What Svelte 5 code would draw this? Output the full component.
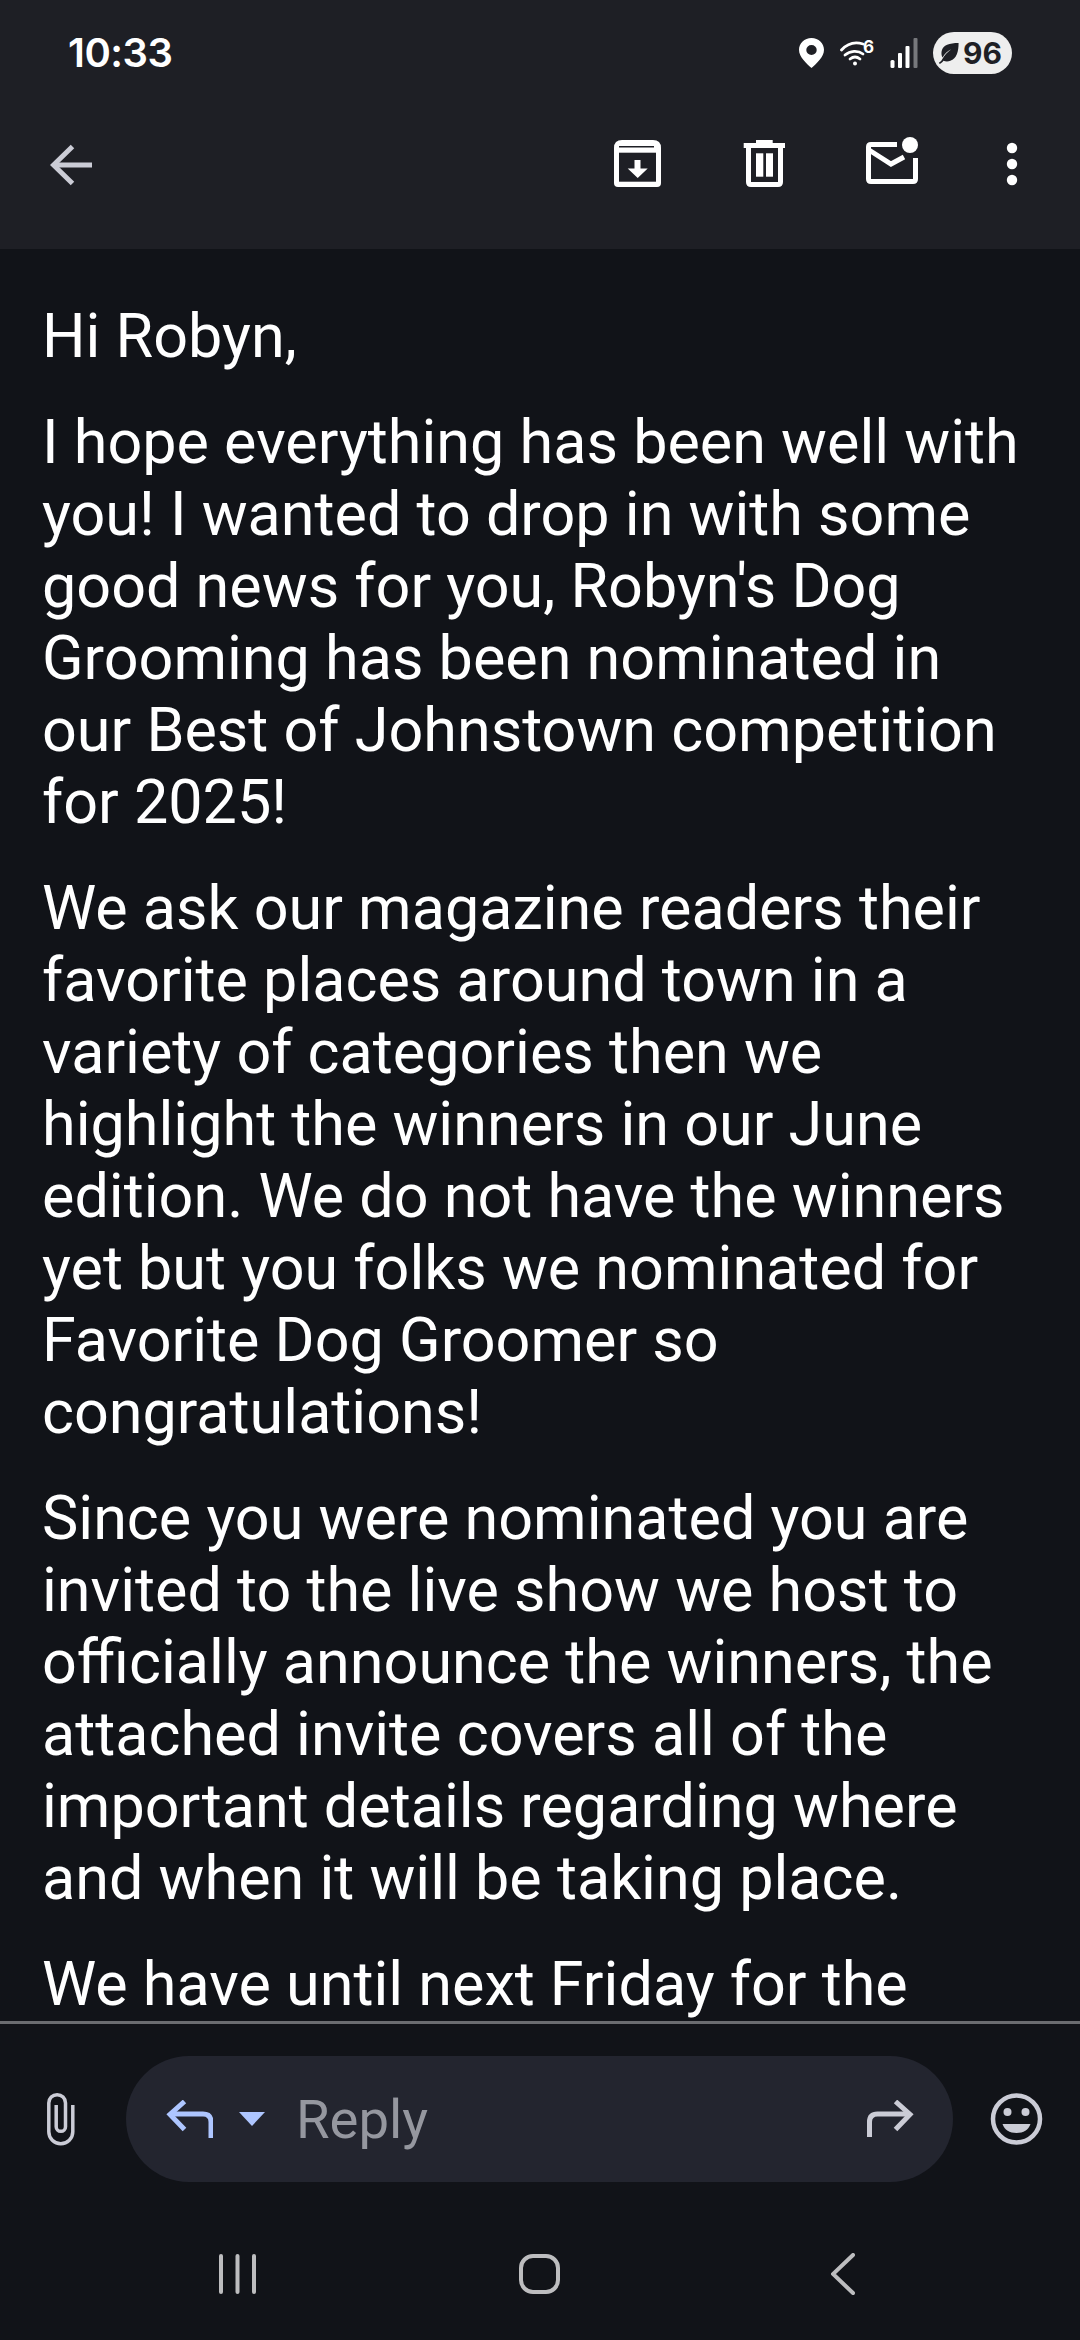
<script>
  const paragraphs = [
    ['Hi Robyn,'],
    [
      'I hope everything has been well with',
      "you! I wanted to drop in with some",
      "good news for you, Robyn's Dog",
      'Grooming has been nominated in',
      'our Best of Johnstown competition',
      'for 2025!'
    ],
    [
      'We ask our magazine readers their',
      'favorite places around town in a',
      'variety of categories then we',
      'highlight the winners in our June',
      'edition. We do not have the winners',
      'yet but you folks we nominated for',
      'Favorite Dog Groomer so',
      'congratulations!'
    ],
    [
      'Since you were nominated you are',
      'invited to the live show we host to',
      'officially announce the winners, the',
      'attached invite covers all of the',
      'important details regarding where',
      'and when it will be taking place.'
    ],
    ['We have until next Friday for the']
  ];
</script>

<div class="screen">
  <header class="top">
    <div class="status">
      <span class="time">10:33</span>
      <div class="status-icons">
        <svg class="pin" width="25" height="30" viewBox="0 0 24 30" preserveAspectRatio="none">
          <path fill-rule="evenodd" fill="#fff" d="M12 0C5.2 0 0 5.2 0 11.8 0 19 7 25.5 12 30c5-4.5 12-11 12-18.200C24 5.200 18.800 0 12 0zm0 7a5 5 0 1 1 0 10 5 5 0 0 1 0-10z" />
        </svg>
        <div class="wifi">
          <svg width="34" height="26" viewBox="0 0 34 26" fill="none" stroke="#fff" stroke-width="2.800" stroke-linecap="round">
            <path d="M1.500 10C7 4 15 1.500 23 4" />
            <path d="M5 15c5-4.500 13-5 18-1" />
            <path d="M10 19c3-2.400 7-2.400 10 0" />
            <circle cx="15" cy="23.500" r="2" fill="#fff" stroke="none" />
          </svg>
          <span class="wifi-six">6</span>
        </div>
        <svg class="signal" width="28" height="30" viewBox="0 0 27 30">
          <rect x="0" y="22" width="4" height="8" rx="1.500" fill="#fff" />
          <rect x="7.500" y="15" width="4" height="15" rx="1" fill="#fff" />
          <rect x="15" y="8" width="4" height="22" rx="1" fill="#fff" />
          <rect x="23" y="0" width="4" height="30" rx="1" fill="#77787c" />
        </svg>
        <div class="battery">
          <svg width="23" height="22" viewBox="0 0 24 24">
            <path fill="#1e1f25" d="M23 1C13 1 6 3 4.500 10c-.5 2.500 0 5 1 7C8 12.500 11 10 15 8c-4 3-7.500 6.500-10 11-.8 1.300-1.800 2.700-3.500 3.500l1 1.500c1.800-.8 3-2 4-3.500 2 .8 5 1 7.500 0C21 18 23 10 23 1z" />
          </svg>
          <span>96</span>
        </div>
      </div>
    </div>

    <div class="toolbar">
      <svg class="back" width="42" height="42" viewBox="0 0 42 42" fill="none" stroke="#cbccd6" stroke-width="5">
        <path d="M42 21H4" />
        <path d="M22.500 2.500 3.500 21l19 18.500" />
      </svg>
      <div class="actions">
        <svg width="60" height="60" viewBox="0 0 60 60">
          <path fill="#fff" d="M7 13v35q0 4 4 4h39q4 0 4-4V13q0-8-8-8H15q-8 0-8 8z" />
          <rect x="12" y="17.700" width="37" height="29" fill="#1e1f25" />
          <rect x="12" y="11" width="35" height="1.500" fill="#1e1f25" />
          <path fill="#fff" d="M27.500 25h6v8.500h7.200L30.700 43l-10-9.500h6.800z" />
        </svg>
        <svg width="60" height="60" viewBox="0 0 60 60">
          <path fill="#fff" d="M22 5h16.700v3H51v5H9.700V8H22z" />
          <path fill="none" stroke="#fff" stroke-width="5" d="M14.500 12v35q0 2.500 2.500 2.500h27q2.500 0 2.500-2.500V12" />
          <rect x="22" y="18.300" width="7.300" height="23.400" fill="#fff" />
          <rect x="32" y="18.300" width="7" height="23.400" fill="#fff" />
        </svg>
        <svg class="mail" width="60" height="60" viewBox="0 0 60 60" fill="none">
          <path stroke="#fff" stroke-width="5" d="M36 13.500H10q-2.500 0-2.500 2.500v32q0 2.500 2.500 2.500h42q2.500 0 2.500-2.500V27" />
          <path stroke="#fff" stroke-width="5" d="M8 19l22 14 13-7" />
          <circle cx="49" cy="14" r="8" fill="#fff" />
        </svg>
        <svg class="more" width="12" height="46" viewBox="0 0 12 46">
          <circle cx="6" cy="6" r="5.200" fill="#fff" />
          <circle cx="6" cy="22" r="5.200" fill="#fff" />
          <circle cx="6" cy="38" r="5.200" fill="#fff" />
        </svg>
      </div>
    </div>
  </header>

  <main class="content">
    {#each paragraphs as lines}
      <p>
        {#each lines as line}
          <span class="line">{line}</span>
        {/each}
      </p>
    {/each}
  </main>

  <footer class="bottom">
    <div class="reply-row">
      <svg class="clip" width="30" height="54" viewBox="0 0 30 54" fill="none" stroke="#cbccd6" stroke-width="3.500">
        <path d="M26.800 13v26.700a12 12 0 0 1-24 0V11a8.350 8.350 0 0 1 16.700 0v23.700a4.650 4.650 0 0 1-9.300 0V13" />
      </svg>
      <div class="reply-box">
        <svg class="reply-arrow" width="47" height="38" viewBox="0 0 47 38" fill="none" stroke="#aec6ff" stroke-width="5">
          <path d="M45 38V22q0-8-8-8H4" />
          <path d="M18.500 1.500 4 14.500l14.500 15" />
        </svg>
        <span class="caret"></span>
        <span class="reply-label">Reply</span>
        <svg class="forward" width="47" height="38" viewBox="0 0 47 38" fill="none" stroke="#cbccd6" stroke-width="5">
          <path d="M2.500 37V22q0-8 8-8H43" />
          <path d="M28.500 1.500 43 14.500l-14.500 15" />
        </svg>
      </div>
      <svg class="emoji" width="53" height="54" viewBox="0 0 52 54">
        <circle cx="26" cy="27" r="23.500" fill="none" stroke="#cbccd6" stroke-width="4.500" />
        <circle cx="17" cy="20" r="4" fill="#cbccd6" />
        <circle cx="35" cy="20" r="4" fill="#cbccd6" />
        <path fill="#cbccd6" d="M12 32h28c-2 6-7 9-14 9s-12-3-14-9z" />
      </svg>
    </div>

    <nav class="navbar">
      <svg width="37" height="40" viewBox="0 0 37 40" fill="#bdbdbf">
        <rect x="0" y="0" width="4" height="40" rx="2" />
        <rect x="16.500" y="0" width="4" height="40" rx="2" />
        <rect x="33" y="0" width="4" height="40" rx="2" />
      </svg>
      <svg width="41" height="40" viewBox="0 0 41 40" fill="none" stroke="#bdbdbf" stroke-width="4">
        <rect x="2" y="2" width="37" height="36" rx="12" />
      </svg>
      <svg width="24" height="42" viewBox="0 0 24 42" fill="none" stroke="#bdbdbf" stroke-width="4" stroke-linecap="round">
        <path d="M22 2 2 21l20 19" />
      </svg>
    </nav>
  </footer>
</div>

<style>
  :global(body) {
    margin: 0;
    background: #111318;
  }

  .screen {
    width: 1080px;
    height: 2340px;
    display: flex;
    flex-direction: column;
    overflow: hidden;
    background: #111318;
    color: #fff;
    font-family: Roboto, sans-serif;
  }

  .top {
    height: 249px;
    flex: none;
    background: #1e1f25;
  }

  .status {
    height: 105px;
    display: flex;
    align-items: center;
    justify-content: space-between;
    padding: 0 68px 0 68px;
  }

  .time {
    font-family: Inter, sans-serif;
    font-weight: 600;
    font-size: 40px;
    letter-spacing: -0.5px;
  }

  .status-icons {
    display: flex;
    align-items: center;
  }

  .pin {
    margin-right: 16px;
  }

  .wifi {
    position: relative;
    width: 34px;
    height: 26px;
  }

  .wifi svg {
    display: block;
  }

  /* the 6 sits over the corner of the wifi arcs */
  .wifi-six {
    position: absolute;
    top: -3px;
    right: 0;
    color: #fff;
    font-family: Inter, sans-serif;
    font-weight: 700;
    font-size: 17px;
    line-height: 20px;
  }

  .signal {
    margin-left: 16px;
    margin-right: 15px;
  }

  .battery {
    width: 79px;
    height: 42px;
    box-sizing: border-box;
    padding-left: 4px;
    border-radius: 21px;
    background: #eeeeee;
    color: #1e1f25;
    display: flex;
    align-items: center;
    gap: 3px;
    font-family: Inter, sans-serif;
    font-weight: 700;
    font-size: 30px;
  }

  .battery svg {
    flex: none;
  }

  .toolbar {
    height: 120px;
    display: flex;
    align-items: center;
    justify-content: space-between;
    padding: 0 62px 0 50px;
  }

  .actions {
    display: flex;
    align-items: center;
    gap: 67px;
  }

  .mail {
    margin-top: -8px;
  }

  .more {
    margin-left: 18px;
  }

  .content {
    flex: 1;
    min-height: 0;
    overflow: hidden;
    padding: 51px 0 0 42px;
    font-size: 61.100px;
    line-height: 72px;
  }

  p {
    margin: 0 0 34px;
  }

  .line {
    display: block;
    white-space: nowrap;
  }

  .bottom {
    height: 319px;
    flex: none;
    box-sizing: border-box;
    border-top: 3px solid #6b6c70;
  }

  .reply-row {
    display: flex;
    align-items: center;
    height: 126px;
    margin-top: 32px;
    padding-left: 46px;
  }

  .clip {
    margin-right: 50px;
  }

  .reply-box {
    width: 827px;
    height: 126px;
    box-sizing: border-box;
    padding: 0 39px 0 40px;
    border-radius: 63px;
    background: #23252f;
    display: flex;
    align-items: center;
  }

  .caret {
    width: 0;
    height: 0;
    margin: 0 31px 0 26px;
    border-left: 13.500px solid transparent;
    border-right: 13.500px solid transparent;
    border-top: 14px solid #aec6ff;
  }

  .reply-label {
    flex: 1;
    font-size: 54.500px;
    color: #95979f;
  }

  .emoji {
    margin-left: 37px;
  }

  .navbar {
    display: flex;
    align-items: center;
    height: 42px;
    margin-top: 71px;
    padding-left: 219px;
  }

  .navbar svg:nth-child(2) {
    margin: 0 271px 0 263px;
  }
</style>
